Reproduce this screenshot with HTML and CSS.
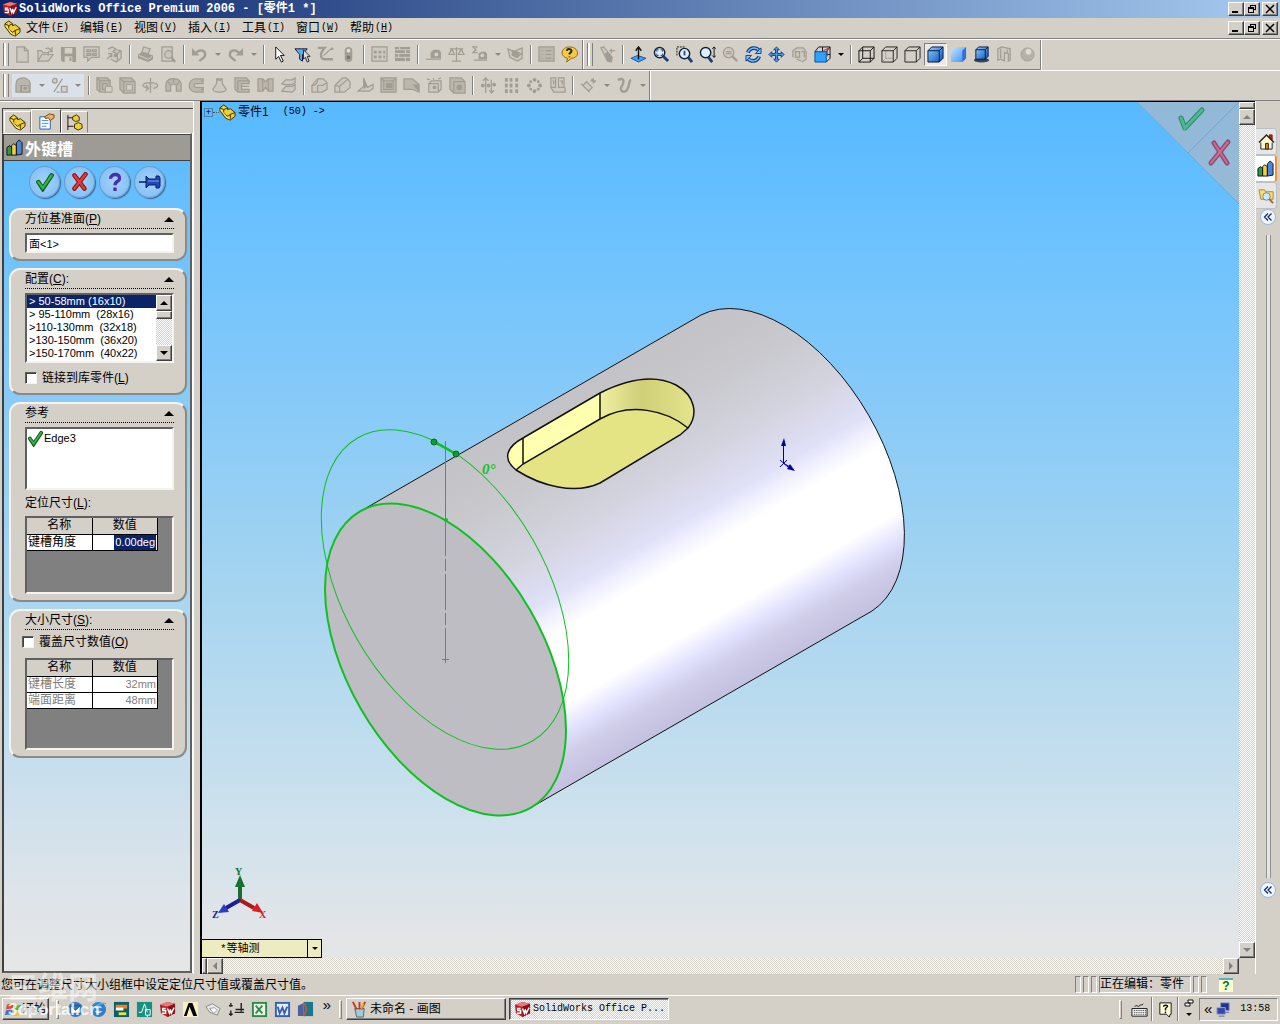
FILE: index.html
```html
<!DOCTYPE html>
<html lang="zh-CN">
<head>
<meta charset="utf-8">
<title>SolidWorks Office Premium 2006 - [零件1 *]</title>
<link rel="stylesheet" href="styles.css">
</head>
<body>
<svg class="sprite" aria-hidden="true">
  <defs>
    <linearGradient id="gBlue" x1="0" y1="0" x2="1" y2="1"><stop offset="0" stop-color="#8fd0ff"/><stop offset="1" stop-color="#0a50c0"/></linearGradient>
    <linearGradient id="gLight" x1="0" y1="0" x2="1" y2="1"><stop offset="0" stop-color="#c8e6ff"/><stop offset="1" stop-color="#3a8cf0"/></linearGradient>
  </defs>
  <symbol id="part" viewBox="0 0 18 18"><path d="M1 4l4-3 4 3v2l3-1 5 4v4l-5 4-5-2-6-8z" fill="#f0cf30" stroke="#3a2c00"/><path d="M1 4l4 2 4-2M5 6v4l4 3 3-2 5-2M12 11v6" fill="none" stroke="#3a2c00"/><path d="M2 6l6 8 4 2" fill="none" stroke="#fff080"/></symbol>
  <symbol id="sw" viewBox="0 0 18 18"><path d="M1 4l8-3 8 2v10l-8 4-7-4z" fill="#b81f28"/><path d="M1 4l8-3 8 2-8 3z" fill="#e87a78"/><path d="M9 6l8-3v10l-8 4z" fill="#8c1018"/><path d="M7 8H4v2h3v3H3M9 8l2 5 1-4 1 4 3-6" fill="none" stroke="#fff" stroke-width="1.5"/></symbol>
  <symbol id="new" viewBox="0 0 18 18"><path d="M3 1h8l4 4v12H3zM11 1v4h4" class="d"/></symbol>
  <symbol id="open" viewBox="0 0 18 18"><path d="M1 16V5h4l1 2h6v3M1 16l4-7h12l-5 7zM9 3c3-2 5 0 6 2M16 1v5h-4" class="d"/></symbol>
  <symbol id="save" viewBox="0 0 18 18"><path d="M1 1h16v16H3l-2-2z" class="s"/><path d="M5 2h8v6H5z" class="p"/><path d="M5 11h8v6H5z" class="p"/><path d="M10 12h2v4h-2z" class="s"/></symbol>
  <symbol id="drw" viewBox="0 0 18 18"><path d="M1 1h16v11H9l-4 4v-4H1zM4 4h4v2H4zM10 4h4v2h-4zM4 8h4v2H4zM10 8h4v2h-4z" class="d"/></symbol>
  <symbol id="asm" viewBox="0 0 18 18"><path d="M2 3l5-2 4 3 5 1v8l-5 4-6-3M7 6l5 2v8M7 6l4-3M12 8l4-3M1 14l5-5M6 12V8H2" class="d"/><circle cx="10" cy="10" r="2" class="s"/></symbol>
  <symbol id="print" viewBox="0 0 18 18"><path d="M5 7l2-6 7 2-2 5z" class="d"/><path d="M1 9l5-3 11 4v4l-5 3-11-4z" class="s"/><path d="M2 10l10 4 4-3" class="l"/></symbol>
  <symbol id="prev" viewBox="0 0 18 18"><path d="M2 1h11v15H2z" class="d"/><circle cx="9" cy="9" r="4" class="d"/><path d="M12 12l4 5" class="w"/></symbol>
  <symbol id="undo" viewBox="0 0 18 18"><path d="M5 8c3-5 10-4 10 1 0 4-4 4-6 7" class="w"/><path d="M1 2v8h8z" class="s"/></symbol>
  <symbol id="redo" viewBox="0 0 18 18"><path d="M13 8C10 3 3 4 3 9c0 4 4 4 6 7" class="w"/><path d="M17 2v8H9z" class="s"/></symbol>
  <symbol id="cursor" viewBox="0 0 18 18"><path d="M5 1v13l3-3 3 6 2-1-3-6h4z" fill="#fff" stroke="#111"/></symbol>
  <symbol id="filter" viewBox="0 0 18 18"><path d="M1 3h13l-5 6v7l-3-2V9z" fill="#58b4f0" stroke="#113"/><path d="M10 4v10l2-2 2 5 2-1-2-5h3z" fill="#ddd" stroke="#222"/></symbol>
  <symbol id="sketch" viewBox="0 0 18 18"><path d="M1 2h7c-5 5-5 12 0 12h9" class="w"/><path d="M7 10L16 2" class="d"/><circle cx="16" cy="3" r="1.5" class="s"/></symbol>
  <symbol id="light" viewBox="0 0 18 18"><rect x="5" y="1" width="8" height="16" rx="4" fill="currentColor"/><circle cx="9" cy="5" r="2" fill="#ddd"/><circle cx="9" cy="12" r="2" fill="#777"/></symbol>
  <symbol id="grid" viewBox="0 0 18 18"><path d="M1 1h16v15H1z" class="d"/><path d="M3 5h3v3H3zM8 5h3v3H8zM13 5h2v3h-2zM3 10h3v3H3zM8 10h3v3H8zM13 10h2v3h-2z" class="s"/></symbol>
  <symbol id="brick" viewBox="0 0 18 18"><path d="M1 1h16v15H1z" class="s"/><path d="M1 4h16M1 8h16M1 12h16M6 1v3M12 4v4M5 8v4M12 12v4" class="l"/></symbol>
  <symbol id="tape" viewBox="0 0 18 18"><path d="M6 13V7l3-3h6l2 3v6z" class="s"/><path d="M1 14h16" class="d"/><circle cx="12" cy="9" r="2" class="p"/></symbol>
  <symbol id="scale" viewBox="0 0 18 18"><path d="M9 1v15M4 16h10M2 3h14M4 3l-3 6h6zM14 3l-3 6h6z" class="d"/></symbol>
  <symbol id="sigma" viewBox="0 0 18 18"><path d="M7 1H2l3 3-3 3h5M3 15h14" class="d"/><path d="M8 14V8l3-2h4l2 2v6z" class="s"/><circle cx="12" cy="10" r="2" class="p"/></symbol>
  <symbol id="check" viewBox="0 0 18 18"><path d="M1 3l6 3 9-4v11l-5 3-8-4zM5 9l6 3 5-5" class="d"/><path d="M5 4l9 3-3 6-6-3z" class="s"/></symbol>
  <symbol id="list" viewBox="0 0 18 18"><path d="M1 1h16v15H1z" class="g"/><path d="M4 5h1M8 5h6M4 9h1M8 9h6M4 13h1M8 13h6" class="d"/></symbol>
  <symbol id="help" viewBox="0 0 18 18"><path d="M9 1c11 0 11 12 2 12l-5 4 1-4C-2 11 0 1 9 1z" fill="#f7cb3c" stroke="#8a6510"/><path d="M6 5c1-3 6-2 5 1L9 8v1M9 11v1" fill="none" stroke="#202040" stroke-width="2"/></symbol>
  <symbol id="wand" viewBox="0 0 18 18"><path d="M2 2l3-1 9 11-1 5-4-1z" class="d"/><path d="M6 8l3-2 5 6-1 5-4-1z" class="s"/><path d="M13 3v5M11 5h6" class="d"/></symbol>
  <symbol id="normal" viewBox="0 0 18 18"><path d="M1 13l7-3 9 3-8 4z" fill="#3e9ff4" stroke="#1556a8"/><path d="M9 14V2M6 5l3-4 3 4" fill="none" stroke="#111" stroke-width="1.5"/></symbol>
  <symbol id="fit" viewBox="0 0 18 18"><circle cx="7" cy="7" r="5.500" fill="#dceeff" stroke="#123" stroke-width="1.5"/><path d="M4 6V4h2M8 4h2v2M10 8v2H8M6 10H4V8" fill="none" stroke="#246"/><path d="M11 11l5 5" stroke="#164078" stroke-width="3"/></symbol>
  <symbol id="zarea" viewBox="0 0 18 18"><path d="M1 10V1h9" fill="none" stroke="#111" stroke-dasharray="2 1"/><circle cx="9" cy="8" r="5.500" fill="#dceeff" stroke="#123" stroke-width="1.5"/><path d="M13 12l4 5" stroke="#164078" stroke-width="3"/><path d="M9 5v5" stroke="#358" stroke-width="2"/></symbol>
  <symbol id="zio" viewBox="0 0 18 18"><circle cx="7" cy="7" r="5.500" fill="#dceeff" stroke="#123" stroke-width="1.5"/><path d="M10 12l4 5" stroke="#164078" stroke-width="3"/><path d="M16 1v11M14 3l2-2 2 2M14 10l2 2 2-2" fill="none" stroke="#111"/></symbol>
  <symbol id="zsel" viewBox="0 0 18 18"><circle cx="7" cy="7" r="5.500" class="d"/><path d="M4 6h6M4 8h6" class="d"/><path d="M11 11l5 5" class="w"/></symbol>
  <symbol id="rot" viewBox="0 0 18 18"><path d="M3 7c2-6 9-6 12-2M15 11c-2 6-9 6-12 2" fill="none" stroke="#124080" stroke-width="4"/><path d="M3 7c2-6 9-6 12-2M15 11c-2 6-9 6-12 2" fill="none" stroke="#7cc0f8" stroke-width="1.500"/><path d="M17 2v6h-6zM1 16v-6h6z" fill="#7cc0f8" stroke="#124080"/></symbol>
  <symbol id="pan" viewBox="0 0 18 18"><path d="M9 1l3 3h-2v4h4V6l3 3-3 3v-2h-4v4h2l-3 3-3-3h2v-4H4v2L1 9l3-3v2h4V4H6z" fill="#4d9be8" stroke="#0c3c88"/></symbol>
  <symbol id="rv" viewBox="0 0 18 18"><path d="M2 12V5l4-3h7l3 4v8l-4 3M5 12V6h4v6zM11 6h3v6M6 14l5 2" class="d"/></symbol>
  <symbol id="orient" viewBox="0 0 18 18"><path d="M5 1h12v12l-4 4M17 1l-4 5M9 1v5M13 9h4" fill="none" stroke="#111"/><path d="M10 5l6-3M14 4v7" stroke="#c02020"/><path d="M1 6h12v11H1z" fill="#2fa2ff" stroke="#0a48a0"/><path d="M1 6l4-5" stroke="#111"/></symbol>
  <symbol id="wire" viewBox="0 0 18 18"><path d="M1 5h12v12H1zM5 1h12v12H5zM1 5l4-4M13 5l4-4M1 17l4-4M13 17l4-4" fill="none" stroke="#111"/></symbol>
  <symbol id="hid" viewBox="0 0 18 18"><path d="M1 5h12v12H1zM1 5l4-4h12v12l-4 4M13 5l4-4" fill="none" stroke="#222"/><path d="M5 5v8h8M1 17l4-4" fill="none" stroke="#777" stroke-dasharray="1 1"/></symbol>
  <symbol id="norm" viewBox="0 0 18 18"><path d="M1 5h12v12H1zM1 5l4-4h12v12l-4 4M13 5l4-4" fill="none" stroke="#222"/></symbol>
  <symbol id="shade" viewBox="0 0 18 18"><path d="M1 5l4-4h12v12l-4 4H1z" fill="url(#gBlue)" stroke="#001838"/><path d="M1 5h12v12M13 5l4-4" fill="none" stroke="#001838"/></symbol>
  <symbol id="shade2" viewBox="0 0 18 18"><path d="M1 5l4-4h12v12l-4 4H1z" fill="url(#gLight)"/><path d="M13 5l4-4v12l-4 4z" fill="#2c70d8"/></symbol>
  <symbol id="shadow" viewBox="0 0 18 18"><ellipse cx="9" cy="15" rx="8" ry="2.5" fill="#345"/><path d="M3 4l3-3h10v10l-3 3H3z" fill="url(#gBlue)" stroke="#001838"/><path d="M3 4h10v10M13 4l3-3" fill="none" stroke="#001838"/></symbol>
  <symbol id="sect" viewBox="0 0 18 18"><path d="M2 3l4-2 9 2v12l-2 1V8L9 7v9l-4-2-3 1z" class="d"/><path d="M5 3v10M12 4v3" class="d"/></symbol>
  <symbol id="ball" viewBox="0 0 18 18"><circle cx="9" cy="9" r="7" fill="#b4b1a9" stroke="#a5a29a"/><circle cx="10" cy="6" r="3" fill="#dedbd4"/></symbol>
  <symbol id="f1" viewBox="0 0 18 18"><path d="M1 16V8c0-9 13-9 15-2v10zM6 16V9h8" class="g"/><path d="M7 9h8v7H7z" class="d"/><circle cx="11" cy="12" r="2" class="s"/></symbol>
  <symbol id="f2" viewBox="0 0 18 18"><circle cx="4" cy="4" r="2.500" class="d"/><path d="M3 16L12 2M11 10h6v6h-6zM6 16h3" class="d"/></symbol>
  <symbol id="f3" viewBox="0 0 18 18"><path d="M1 1h11l3 3v12H4l-3-3z" class="g"/><path d="M4 4h11M4 4v12M1 1l3 3M7 7h5v6H7z" class="d"/><path d="M10 10h7v6h-7z" class="k"/></symbol>
  <symbol id="f4" viewBox="0 0 18 18"><path d="M1 1h12l4 4v12H5l-4-4z" class="g"/><path d="M5 5h12M5 5v12M1 1l4 4" class="d"/><path d="M8 8h6v6H8z" class="k"/></symbol>
  <symbol id="f5" viewBox="0 0 18 18"><path d="M9 1v16M6 12c-8-2-6-6 3-6s10 5 3 6M4 9l3 3-3 3" class="d"/></symbol>
  <symbol id="f6" viewBox="0 0 18 18"><path d="M1 15V7c2-7 14-7 16 0v8h-5V9c-1-2-5-2-6 0v6z" class="g"/><path d="M6 9L3 5M12 9l3-4M9 2v5" class="d"/></symbol>
  <symbol id="f7" viewBox="0 0 18 18"><path d="M16 2H8C-1 3-1 15 8 16h8v-5H9c-3 0-3-4 0-4h7z" class="g"/><path d="M16 2l-2 3M16 11l-2 3" class="d"/></symbol>
  <symbol id="f8" viewBox="0 0 18 18"><path d="M6 2h6v5l4 6c0 4-14 4-14 0l4-6zM6 2c2 2 4 2 6 0" class="d"/></symbol>
  <symbol id="f9" viewBox="0 0 18 18"><path d="M1 1h12l3 3v3H8v6h8v3H4l-3-3z" class="g"/><path d="M4 4h12M4 4v12M8 10h8" class="d"/></symbol>
  <symbol id="f10" viewBox="0 0 18 18"><path d="M1 2h5l3 3 3-3h5v13h-5l-3-4-3 4H1z" class="g"/><path d="M6 2v13M12 2v13" class="d"/></symbol>
  <symbol id="f11" viewBox="0 0 18 18"><path d="M2 7l4-4h7l3-2v5l-3 2H5zM2 15l4-5h7l3-2v5l-3 3z" class="d"/></symbol>
  <symbol id="f12" viewBox="0 0 18 18"><path d="M1 16V9l6-7h6l4 4v7l-5 3z" class="d"/><path d="M1 9c4 0 6-2 6-7M7 9h5l5-3M7 9v7" class="d"/></symbol>
  <symbol id="f13" viewBox="0 0 18 18"><path d="M1 16V9l8-8h4l4 4v6l-6 5z" class="d"/><path d="M1 9l5 1 9-8M6 10v6" class="d"/></symbol>
  <symbol id="f14" viewBox="0 0 18 18"><path d="M7 1v9l-6 5h12l4-3V8l-6 3zM7 10h5" class="d"/><path d="M7 3l4 7-4 3z" class="s"/></symbol>
  <symbol id="f15" viewBox="0 0 18 18"><path d="M1 1h16v15H1z" class="g"/><path d="M4 4h10v9H4zM1 1l3 3M17 1l-3 3" class="d"/><path d="M6 6h7v6H6z" class="s"/></symbol>
  <symbol id="f16" viewBox="0 0 18 18"><path d="M1 2h9l7 6v8L10 13H1z" class="g"/><path d="M10 8h7v8z" class="s"/></symbol>
  <symbol id="f17" viewBox="0 0 18 18"><path d="M3 7h10v9H3zM3 7l3-3h10v9l-3 3M1 2l3 1M8 1v2M13 2l3-1" class="d"/><circle cx="9" cy="11" r="2" class="s"/></symbol>
  <symbol id="f18" viewBox="0 0 18 18"><path d="M1 1h12l4 4v12H5l-4-4z" class="g"/><path d="M5 5h12M5 5v12" class="d"/><circle cx="11" cy="11" r="3" class="s"/></symbol>
  <symbol id="f19" viewBox="0 0 18 18"><path d="M6 1v16M3 4l3-3 3 3M12 3v13M10 14l2 3 3-3" class="d"/><circle cx="3" cy="9" r="2" class="s"/><circle cx="15" cy="8" r="2" class="s"/><circle cx="9" cy="9" r="2" class="s"/></symbol>
  <symbol id="f20" viewBox="0 0 18 18"><path d="M2 1h3v4H2zM7 1h3v4H7zM13 1h3v4h-3zM2 7h3v4H2zM7 7h3v4H7zM13 7h3v4h-3zM2 13h3v4H2zM7 13h3v4H7zM13 13h3v4h-3z" class="s"/></symbol>
  <symbol id="f21" viewBox="0 0 18 18"><g class="s"><circle cx="9" cy="3" r="2"/><circle cx="9" cy="15" r="2"/><circle cx="3" cy="9" r="2"/><circle cx="15" cy="9" r="2"/><circle cx="5" cy="5" r="1.500"/><circle cx="13" cy="5" r="1.500"/><circle cx="5" cy="13" r="1.500"/><circle cx="13" cy="13" r="1.500"/></g></symbol>
  <symbol id="f22" viewBox="0 0 18 18"><path d="M2 1h5v10H2zM10 1h6v10h-6zM2 11l3 5h12v-5M4 4h1v4M12 4h2v4" class="d"/></symbol>
  <symbol id="f23" viewBox="0 0 18 18"><path d="M3 9l4-4 6 6-4 4zM1 7l9 9M14 1v6M11 4h6M12 2l4 4" class="d"/></symbol>
  <symbol id="f24" viewBox="0 0 18 18"><path d="M2 3c7-3 7 2 4 7s3 8 6 3 1-9 4-10" class="w"/></symbol>
  <symbol id="lib" viewBox="0 0 18 18"><path d="M1 9l3-2 2 2v8H1z" fill="#2c9a40" stroke="#111"/><path d="M6 7l2-2 3 2v10H6z" fill="#f0d040" stroke="#111"/><path d="M11 4l3-3 3 3v12l-6 1z" fill="#4b86d8" stroke="#111"/></symbol>
  <symbol id="prop" viewBox="0 0 18 18"><path d="M2 4h11v13H2z" fill="#fff" stroke="#1c60b0"/><path d="M4 8h7M4 11h7M4 14h5" stroke="#3a8cd8"/><path d="M7 4l5-3 5 1v3l-4 3-2-3-3 1z" fill="#f0b070" stroke="#7a4010"/></symbol>
  <symbol id="conf" viewBox="0 0 18 18"><path d="M2 1v16M2 4h5M2 13h6" stroke="#111"/><path d="M7 3l4-2 3 2v4l-4 1-3-2zM9 11l4-2 4 2v4l-4 2-4-2z" fill="#f0cf30" stroke="#3a2c00"/></symbol>
  <symbol id="gtick" viewBox="0 0 18 18"><path d="M3 9l4 6L15 3" fill="none" stroke="#0c5c1c" stroke-width="4" stroke-linecap="round"/><path d="M3 9l4 5.500L15 3" fill="none" stroke="#35b84a" stroke-width="2" stroke-linecap="round"/></symbol>
  <symbol id="rx" viewBox="0 0 18 18"><path d="M4 3l9 12M14 2L4 15" stroke="#8c1418" stroke-width="4" stroke-linecap="round"/><path d="M4 3l9 12M14 2L4 15" stroke="#e0403c" stroke-width="2" stroke-linecap="round"/></symbol>
  <symbol id="pq" viewBox="0 0 18 18"><path d="M5 6c0-5 9-5 8 0 0 3-4 2-4 6M9 14v3" fill="none" stroke="#4a2cb0" stroke-width="3"/></symbol>
  <symbol id="pin" viewBox="0 0 24 18"><path d="M1 9h8" stroke="#0a1c60" stroke-width="1.500"/><path d="M8 3l3 3h7V3h3l1 2v8l-1 2h-3v-3h-7l-3 3z" fill="#2248b8" stroke="#0a1c60"/><path d="M10 8h11" stroke="#7aa0f0"/></symbol>
  <symbol id="house" viewBox="0 0 18 18"><path d="M3 9v8h12V9" fill="#fff8d0" stroke="#222"/><path d="M12 2h3v6h-3z" fill="#b02020" stroke="#901010"/><path d="M1 10l8-8 8 8" fill="#fff8d0" stroke="#222" stroke-width="1.500"/><path d="M8 11h3v6H8z" fill="#d09020" stroke="#222"/></symbol>
  <symbol id="folder" viewBox="0 0 18 18"><path d="M1 3h6l1 2h8v8H3z" fill="#f8dc70" stroke="#b08820"/><circle cx="9" cy="10" r="4" fill="#cfe8ff" stroke="#5a88b0"/><path d="M12 13l4 4" stroke="#b06820" stroke-width="2"/></symbol>
  <symbol id="mini" viewBox="0 0 10 10"><path d="M1 8h6" stroke="#000" stroke-width="2"/></symbol>
  <symbol id="rest" viewBox="0 0 10 10"><path d="M3 1h6v1H3zM8 2h1v4H7V5h1zM3 2h1v1H3zM1 3h6v2H1zM1 5h1v4H1zM6 5h1v4H6zM1 8h6v1H1z" fill="#000"/></symbol>
  <symbol id="close" viewBox="0 0 10 10"><path d="M1 1l8 8M9 1L1 9" stroke="#000" stroke-width="1.500"/></symbol>
  <symbol id="win" viewBox="0 0 18 18"><path d="M2 4c3-2 5-1 7 0l-1 5c-2-1-4-1-7 0z" fill="#e04a28"/><path d="M10 4c2 1 4 1 7 0l-1 5c-3 1-5 1-7 0z" fill="#50b040"/><path d="M1 10c3-1 5-1 7 0l-1 5c-2-1-4-1-7 0z" fill="#3070e0"/><path d="M9 10c2 1 4 1 7 0l-1 5c-3 1-5 1-7 0z" fill="#f0c020"/></symbol>
  <symbol id="paint" viewBox="0 0 18 18"><path d="M4 8h10l-1 9H6z" fill="#a8c8d8" stroke="#486878"/><path d="M6 9L2 1M9 9V1M11 9l4-8" stroke="#c83820" stroke-width="2"/><path d="M11 8l2-5" stroke="#e0b020" stroke-width="2"/></symbol>
</svg>

<header class="titlebar">
  <svg class="i16"><use href="#sw"/></svg>
  <h1>SolidWorks Office Premium 2006 - [零件1 *]</h1>
  <div class="winbtns"><button aria-label="最小化"><svg><use href="#mini"/></svg></button><button aria-label="还原"><svg><use href="#rest"/></svg></button><button class="x" aria-label="关闭"><svg><use href="#close"/></svg></button></div>
</header>
<nav class="menubar">
  <svg class="i18"><use href="#part"/></svg>
  <button>文件<span>(<u>F</u>)</span></button><button>编辑<span>(<u>E</u>)</span></button><button>视图<span>(<u>V</u>)</span></button><button>插入<span>(<u>I</u>)</span></button><button>工具<span>(<u>T</u>)</span></button><button>窗口<span>(<u>W</u>)</span></button><button>帮助<span>(<u>H</u>)</span></button>
  <div class="winbtns"><button aria-label="最小化文档"><svg><use href="#mini"/></svg></button><button aria-label="还原文档"><svg><use href="#rest"/></svg></button><button class="x" aria-label="关闭文档"><svg><use href="#close"/></svg></button></div>
</nav>

<div class="toolrow">
  <div class="toolbar">
    <i class="grip"></i>
    <button aria-label="新建"><svg><use href="#new"/></svg></button><button aria-label="打开"><svg><use href="#open"/></svg></button><button aria-label="保存"><svg><use href="#save"/></svg></button><button aria-label="工程图"><svg><use href="#drw"/></svg></button><button aria-label="装配体"><svg><use href="#asm"/></svg></button>
    <i class="sep"></i>
    <button aria-label="打印"><svg><use href="#print"/></svg></button><button aria-label="打印预览"><svg><use href="#prev"/></svg></button>
    <i class="sep"></i>
    <button aria-label="撤消"><svg><use href="#undo"/></svg></button><i class="caret"></i><button aria-label="重做"><svg><use href="#redo"/></svg></button><i class="caret"></i>
    <i class="sep"></i>
    <button aria-label="选择"><svg><use href="#cursor"/></svg></button><button aria-label="过滤器"><svg><use href="#filter"/></svg></button><button aria-label="草图"><svg><use href="#sketch"/></svg></button><button aria-label="重建"><svg><use href="#light"/></svg></button>
    <i class="sep"></i>
    <button aria-label="颜色"><svg><use href="#grid"/></svg></button><button aria-label="纹理"><svg><use href="#brick"/></svg></button>
    <i class="sep"></i>
    <button aria-label="测量"><svg><use href="#tape"/></svg></button><button aria-label="质量特性"><svg><use href="#scale"/></svg></button><button aria-label="方程式"><svg><use href="#sigma"/></svg></button><i class="caret"></i><button aria-label="检查"><svg><use href="#check"/></svg></button>
    <i class="sep"></i>
    <button aria-label="选项"><svg><use href="#list"/></svg></button><button aria-label="帮助"><svg><use href="#help"/></svg></button>
  </div>
  <div class="toolbar">
    <i class="grip"></i>
    <button aria-label="上一视图"><svg><use href="#wand"/></svg></button>
    <i class="sep"></i>
    <button aria-label="正视于"><svg><use href="#normal"/></svg></button><button aria-label="整屏显示"><svg><use href="#fit"/></svg></button><button aria-label="局部放大"><svg><use href="#zarea"/></svg></button><button aria-label="放大缩小"><svg><use href="#zio"/></svg></button><button aria-label="放大选取"><svg><use href="#zsel"/></svg></button><button aria-label="旋转"><svg><use href="#rot"/></svg></button><button aria-label="平移"><svg><use href="#pan"/></svg></button><button aria-label="翻滚"><svg><use href="#rv"/></svg></button><button aria-label="标准视图"><svg><use href="#orient"/></svg></button><i class="caret dark"></i>
    <i class="sep"></i>
    <button aria-label="线架图"><svg><use href="#wire"/></svg></button><button aria-label="隐藏线可见"><svg><use href="#hid"/></svg></button><button aria-label="消除隐藏线"><svg><use href="#norm"/></svg></button><button class="on" aria-label="带边线上色"><svg><use href="#shade"/></svg></button><button aria-label="上色"><svg><use href="#shade2"/></svg></button><button aria-label="阴影"><svg><use href="#shadow"/></svg></button><button aria-label="剖面视图"><svg><use href="#sect"/></svg></button><button aria-label="真实视图"><svg><use href="#ball"/></svg></button>
  </div>
</div>
<div class="toolrow second">
  <div class="toolbar">
    <i class="grip"></i>
    <div class="hot"><button aria-label="特征"><svg><use href="#f1"/></svg></button><i class="caret"></i><button aria-label="草图绘制"><svg><use href="#f2"/></svg></button><i class="caret"></i></div>
    <i class="sep"></i>
    <button aria-label="拉伸"><svg><use href="#f3"/></svg></button><button aria-label="拉伸切除"><svg><use href="#f4"/></svg></button><button aria-label="旋转凸台"><svg><use href="#f5"/></svg></button><button aria-label="旋转切除"><svg><use href="#f6"/></svg></button><button aria-label="扫描"><svg><use href="#f7"/></svg></button><button aria-label="放样"><svg><use href="#f8"/></svg></button><button aria-label="扫描切除"><svg><use href="#f9"/></svg></button><button aria-label="放样切除"><svg><use href="#f10"/></svg></button><button aria-label="加厚"><svg><use href="#f11"/></svg></button>
    <i class="sep"></i>
    <button aria-label="圆角"><svg><use href="#f12"/></svg></button><button aria-label="倒角"><svg><use href="#f13"/></svg></button><button aria-label="筋"><svg><use href="#f14"/></svg></button><button aria-label="抽壳"><svg><use href="#f15"/></svg></button><button aria-label="拔模"><svg><use href="#f16"/></svg></button><button aria-label="异型孔"><svg><use href="#f17"/></svg></button><button aria-label="孔"><svg><use href="#f18"/></svg></button>
    <i class="sep"></i>
    <button aria-label="镜向"><svg><use href="#f19"/></svg></button><button aria-label="线性阵列"><svg><use href="#f20"/></svg></button><button aria-label="圆周阵列"><svg><use href="#f21"/></svg></button><button aria-label="移动实体"><svg><use href="#f22"/></svg></button>
    <i class="sep"></i>
    <button aria-label="参考几何体"><svg><use href="#f23"/></svg></button><i class="caret"></i><button aria-label="曲线"><svg><use href="#f24"/></svg></button><i class="caret"></i>
  </div>
</div>

<main>
  <aside class="panel">
    <div class="tabs"><button aria-label="特征管理器"><svg><use href="#part"/></svg></button><button class="active" aria-label="属性管理器"><svg><use href="#prop"/></svg></button><button aria-label="配置管理器"><svg><use href="#conf"/></svg></button></div>
    <div class="pm">
      <h2><svg class="i18"><use href="#lib"/></svg>外键槽</h2>
      <div class="acts"><button aria-label="确定"><svg><use href="#gtick"/></svg></button><button aria-label="取消"><svg><use href="#rx"/></svg></button><button aria-label="帮助"><svg><use href="#pq"/></svg></button><button aria-label="保持可见"><svg class="wide"><use href="#pin"/></svg></button></div>

      <section class="group">
        <h3><label for="plane">方位基准面(<u>P</u>)</label><i class="tri"></i></h3>
        <input id="plane" class="field" value="面&lt;1&gt;">
      </section>

      <section class="group">
        <h3><label for="cfg">配置(<u>C</u>):</label><i class="tri"></i></h3>
        <div class="listbox">
          <select id="cfg" size="5">
            <option selected>&gt; 50-58mm (16x10)</option><option>&gt; 95-110mm&nbsp; (28x16)</option><option>&gt;110-130mm&nbsp; (32x18)</option><option>&gt;130-150mm&nbsp; (36x20)</option><option>&gt;150-170mm&nbsp; (40x22)</option>
          </select>
          <div class="sb"><button class="up" aria-label="向上"></button><i class="thumb"></i><button class="down" aria-label="向下"></button></div>
        </div>
        <label class="tick"><input type="checkbox"><span>链接到库零件(<u>L</u>)</span></label>
      </section>

      <section class="group">
        <h3><span>参考</span><i class="tri"></i></h3>
        <div class="refs"><svg class="i18"><use href="#gtick"/></svg>Edge3</div>
        <p class="cap">定位尺寸(<u>L</u>):</p>
        <div class="tbl">
          <table><tr><th>名称</th><th>数值</th></tr><tr><td>键槽角度</td><td class="edit"><span>0.00deg</span></td></tr></table>
        </div>
      </section>

      <section class="group">
        <h3><span>大小尺寸(<u>S</u>):</span><i class="tri"></i></h3>
        <label class="tick out"><input type="checkbox"><span>覆盖尺寸数值(<u>O</u>)</span></label>
        <div class="tbl tall">
          <table class="off"><tr><th>名称</th><th>数值</th></tr><tr><td>键槽长度</td><td>32mm</td></tr><tr><td>端面距离</td><td>48mm</td></tr></table>
        </div>
      </section>
    </div>
  </aside>

  <div class="view">
    <div class="canvas">
      <svg class="scene" viewBox="202 102 1037 856" role="img" aria-label="零件模型">
        <defs>
          <linearGradient id="cyl" gradientUnits="userSpaceOnUse" x1="360" y1="511" x2="531" y2="807">
            <stop offset="0" stop-color="#c3c2c6"/><stop offset=".18" stop-color="#c8c8cd"/><stop offset=".36" stop-color="#d4d4e0"/><stop offset=".5" stop-color="#e0e0f8"/><stop offset=".54" stop-color="#eeeeff"/><stop offset=".6" stop-color="#fff"/><stop offset=".79" stop-color="#fff"/><stop offset=".86" stop-color="#e2e2ff"/><stop offset=".92" stop-color="#cfcde8"/><stop offset="1" stop-color="#c4c0e0"/>
          </linearGradient>
          <linearGradient id="pocket" x1="0" x2="1"><stop offset="0" stop-color="#efefa0"/><stop offset=".45" stop-color="#cfcf78"/><stop offset="1" stop-color="#e4e48c"/></linearGradient>
        </defs>
        <path d="M360 511.500L701 315A171 98 60 0 1 872 611L531 807.500A171 98 60 0 1 360 511.500z" fill="url(#cyl)" stroke="#111"/>
        <ellipse cx="445.500" cy="659.500" rx="171" ry="98" transform="rotate(60 445.500 659.500)" fill="#bdbdc3" stroke="#10c020" stroke-width="2"/>
        <path d="M523 438L600 393C630 378 656 375 676 385C696 396 698 415 688 428L680 435L600 483C575 495 541 486 516 470C501 458 508 446 523 438z" fill="#e4e484"/>
        <path d="M516 470C501 458 508 446 523 438L600 393V419L523 464z" fill="#ffffb0"/>
        <path d="M600 393C630 378 656 375 676 385C696 396 698 415 688 428C666 410 630 402 600 419z" fill="url(#pocket)"/>
        <path d="M523 438L600 393C630 378 656 375 676 385C696 396 698 415 688 428L680 435L600 483C575 495 541 486 516 470C501 458 508 446 523 438zM523 438V464M600 393V419M516 470L523 464L600 419C630 402 666 410 688 428" fill="none" stroke="#111" stroke-width="1.500"/>
        <ellipse cx="445" cy="589.500" rx="175" ry="101" transform="rotate(60 445 589.500)" fill="none" stroke="#10c020"/>
        <g fill="none" stroke="#10c020" shape-rendering="crispEdges"><path d="M445.500 441V520"/><path d="M445.500 520V660" stroke-dasharray="36 3 12 3"/><path d="M442 659.500h7M445.500 656v7"/></g>
        <path d="M434 442L456 454" stroke="#10c020" stroke-width="2"/>
        <g fill="#10a018" stroke="#063"><circle cx="434" cy="442" r="3"/><circle cx="456" cy="454" r="3"/></g><circle cx="446" cy="520" r="2" fill="#10c020"/>
        <text x="482" y="474" class="deg">0°</text>
        <g stroke="#0000a0" fill="#0000a0"><path d="M783.500 464V442M780 460l8 7M780 467l7-7M783 463l9 5"/><path d="M781 446h5l-2-8zM787 469l3-5 5 7z" stroke="none"/></g>
        <path d="M240 900V884" stroke="#187030" stroke-width="4"/><path d="M240 875l5 12h-10z" fill="#187030"/>
        <path d="M240 900L226 908" stroke="#1820a0" stroke-width="4"/><path d="M218 913l6-9 5 8z" fill="#2a3cc8"/>
        <path d="M240 900L254 908" stroke="#b01818" stroke-width="4"/><path d="M263 913l-11-2 5-8z" fill="#d82020"/>
        <text x="235" y="875" class="ax y">Y</text><text x="212" y="918" class="ax z">Z</text><text x="259" y="918" class="ax x">X</text>
      </svg>
      <div class="tree"><button aria-label="展开">+</button><i></i><svg class="i18"><use href="#part"/></svg><span>零件1</span><span class="n">(50)&nbsp;-&gt;</span></div>
      <svg class="corner" viewBox="0 0 102 102"><path d="M0 0h102v102z" fill="#a8b8c8" fill-opacity=".72"/><path d="M0 0l102 102M102 0L51 51" stroke="#7aa4c8"/><path d="M44 16l4 10 17-18" fill="none" stroke="#2c8a68" stroke-width="5" stroke-linecap="round" stroke-linejoin="round"/><path d="M44 16l4 10 17-18" fill="none" stroke="#4fb890" stroke-width="3" stroke-linecap="round"/><path d="M77 41l13 20M91 40L74 61" stroke="#984870" stroke-width="5" stroke-linecap="round"/><path d="M77 41l13 20M91 40L74 61" stroke="#c07090" stroke-width="2" stroke-linecap="round"/></svg>
      <div class="viewname"><select aria-label="视图方向"><option>*等轴测</option></select><i class="caret dark"></i></div>
    </div>
    <div class="vs"><i class="split"></i><button class="up" aria-label="向上滚动"></button><button class="down" aria-label="向下滚动"></button></div>
    <div class="hs"><i class="split"></i><button class="left" aria-label="向左滚动"></button><button class="right" aria-label="向右滚动"></button></div>
  </div>

  <aside class="taskpane">
    <button class="tp" aria-label="资源"><svg><use href="#house"/></svg></button><button class="tp active" aria-label="设计库"><svg><use href="#lib"/></svg></button><button class="tp" aria-label="文件探索器"><svg><use href="#folder"/></svg></button>
    <button class="round" aria-label="展开任务窗格"><svg viewBox="0 0 16 16"><path d="M8 4L4 8l4 4M12 4L8 8l4 4"/></svg></button>
    <i class="rail"></i>
    <button class="round" aria-label="展开"><svg viewBox="0 0 16 16"><path d="M8 4L4 8l4 4M12 4L8 8l4 4"/></svg></button>
  </aside>
</main>

<footer class="status">
  <span>您可在调整尺寸大小组框中设定定位尺寸值或覆盖尺寸值。</span>
  <div class="cells"><i></i><i></i><i></i><b>正在编辑：零件</b><i></i><i></i></div>
  <em>?</em>
</footer>
<footer class="taskbar">
  <button class="start"><svg class="i18"><use href="#win"/></svg>开始</button>
  <i class="bar"></i>
  <div class="quick">
    <button aria-label="Outlook"><svg viewBox="0 0 18 18"><circle cx="9" cy="9" r="8" fill="#2f78c0"/><path d="M4 5h10v8H4zM4 5l5 5 5-5" fill="#fff" stroke="#2058a0"/></svg></button>
    <button aria-label="Internet Explorer"><svg viewBox="0 0 18 18"><circle cx="9" cy="9" r="6" fill="none" stroke="#2a80d0" stroke-width="4"/><path d="M4 9h11" stroke="#2a80d0" stroke-width="3"/><path d="M1 14C3 5 12 1 17 3" fill="none" stroke="#60b0e8" stroke-width="1.500"/></svg></button>
    <button aria-label="管理器"><svg viewBox="0 0 18 18"><path d="M1 1h16v16H1z" fill="#086068"/><path d="M3 4h12v4H3z" fill="#f08020"/><path d="M3 7h8v3H3z" fill="#fff"/><path d="M6 12h8v3H6z" fill="#f0e040"/></svg></button>
    <button aria-label="CAD"><svg viewBox="0 0 18 18"><path d="M1 1h16v16H1z" fill="#189080"/><path d="M3 12h3l3-9 3 9M10 9h5v6h-5zM12 15v2" fill="none" stroke="#fff"/></svg></button>
    <button aria-label="SolidWorks"><svg><use href="#sw"/></svg></button>
    <button aria-label="Ansys"><svg viewBox="0 0 18 18"><path d="M1 1h16v16H1z" fill="#f8f0c0"/><path d="M2 16L7 2h4l5 14h-4L8 6 5 16z" fill="#000"/></svg></button>
    <button aria-label="扫描仪"><svg viewBox="0 0 18 18"><path d="M1 6l7-3 8 5-3 7-8-3z" fill="#e8e8e8" stroke="#888"/><path d="M5 8l5-1 3 3-4 3z" fill="#fff" stroke="#999"/></svg></button>
    <button aria-label="标注"><svg viewBox="0 0 18 18"><path d="M3 2v4M1 5h4M3 10v6M1 14h4M7 12h10M14 2v9M8 9h9" fill="none" stroke="#222" stroke-width="1.500"/></svg></button>
    <button aria-label="Excel"><svg viewBox="0 0 18 18"><path d="M1 1h16v16H1z" fill="#2f8a48"/><path d="M3 3h12v12H3z" fill="#e8f4e8"/><path d="M5 5l7 8M12 5l-7 8" stroke="#2f8a48" stroke-width="2"/></svg></button>
    <button aria-label="Word"><svg viewBox="0 0 18 18"><path d="M1 1h16v16H1z" fill="#3060b8"/><path d="M3 3h12v12H3z" fill="#e8eef8"/><path d="M4 6l2 7 3-6 2 6 3-7" fill="none" stroke="#3060b8" stroke-width="2"/></svg></button>
    <button aria-label="工具"><svg viewBox="0 0 18 18"><path d="M1 5l6-3v14H1z" fill="#506098"/><path d="M7 1h10v15H7z" fill="#18788c"/><path d="M8 2l2 7-3 7" fill="none" stroke="#d05040" stroke-width="2"/></svg></button>
  </div>
  <span class="more">»</span>
  <i class="bar"></i>
  <button class="task"><svg class="i18"><use href="#paint"/></svg>未命名 - 画图</button>
  <button class="task down"><svg class="i18"><use href="#sw"/></svg><span>SolidWorks Office P...</span></button>
  <div class="tray">
    <i class="bar"></i>
    <button aria-label="键盘"><svg viewBox="0 0 18 18"><path d="M1 8h16v8H1z" fill="#fff" stroke="#111"/><path d="M3 10h13M3 12h13M3 14h13" stroke="#111" stroke-dasharray="1 1"/><path d="M4 6c2-3 3 1 5-1s3 0 4-2" fill="none" stroke="#111"/></svg></button>
    <i class="line"></i>
    <button aria-label="输入法帮助"><svg viewBox="0 0 18 18"><path d="M3 2h12v12h-1l-1 3-3-3H3z" fill="#ffffd8" stroke="#111"/><path d="M7 6c0-2 5-2 4 0L9 8v2M9 11v2" fill="none" stroke="#111" stroke-width="1.500"/></svg></button>
    <i class="line"></i>
    <span class="opts"><svg viewBox="0 0 10 10"><path d="M4 1h5v3H4zM1 4h5v3H1z" fill="#fff" stroke="#111"/></svg><i class="caret dark"></i></span>
    <div class="clock"><span>«</span><svg class="i18" viewBox="0 0 18 18"><path d="M6 2h9v8H6z" fill="#203090" stroke="#8890c8"/><path d="M2 7h9v7H2z" fill="#304aa8" stroke="#a0a8d8"/><path d="M4 16h6M11 12h4" stroke="#667"/></svg><time>13:58</time></div>
  </div>
  <div class="mark" aria-hidden="true"><strong>三维网</strong><span>3dportal.cn</span></div>
</footer>
</body>
</html>
```
FILE: styles.css
```css
* { box-sizing: border-box; }
body {
  margin: 0;
  min-height: 100vh;
  display: flex;
  flex-direction: column;
  background: #d4d0c8;
  color: #000;
  font: 12px/16px "Liberation Sans", "Noto Sans CJK SC", sans-serif;
}
button {
  margin: 0;
  padding: 0;
  border: 0;
  background: none;
  color: inherit;
  font: inherit;
  display: flex;
  align-items: center;
  justify-content: center;
}
h1, h2, h3, p { margin: 0; }
i, em { font-style: normal; flex: none; }
svg { display: block; flex: none; }
u { text-underline-offset: 1px; }
.sprite { position: absolute; width: 0; height: 0; }
.i16 { width: 16px; height: 16px; }
.i18 { width: 17px; height: 17px; }

/* greyed-out icon strokes and fills */
.d { fill: #c6c2b8; fill-opacity: .5; stroke: currentColor; stroke-width: 1.3; }
.g { fill: #bbb7ad; stroke: currentColor; stroke-width: 1.3; }
.k { fill: #d4d0c8; stroke: currentColor; }
.p { fill: #d4d0c8; }
.s { fill: currentColor; }
.w { fill: none; stroke: currentColor; stroke-width: 2.5; }
.l { fill: none; stroke: #d4d0c8; }

/* title and menu */
.titlebar {
  height: 18px;
  display: flex;
  align-items: center;
  gap: 1px;
  padding: 0 2px;
  background: linear-gradient(90deg, #0a246a, #a6caf0);
}
.titlebar h1 {
  color: #fff;
  font: bold 12px/16px "Liberation Mono", "Noto Sans CJK SC", monospace;
  white-space: pre;
}
.winbtns { display: flex; margin-left: auto; }
.winbtns button, .vs button, .hs button, .sb button, .thumb, .split {
  background: #d4d0c8;
  border: 1px solid;
  border-color: #fff #404040 #404040 #fff;
  box-shadow: inset -1px -1px #808080;
}
.winbtns button { width: 16px; height: 14px; }
.winbtns .x { margin-left: 2px; }
.winbtns svg { width: 10px; height: 10px; }
.menubar {
  height: 21px;
  display: flex;
  align-items: center;
  padding: 0 2px 0 4px;
  border-bottom: 1px solid #808080;
}
.menubar > svg { margin-right: 5px; }
.menubar > button { width: 54px; justify-content: flex-start; }
.menubar span { font: 10px/16px "Liberation Mono", monospace; padding-left: 1px; }

/* toolbars */
.toolrow { display: flex; height: 31px; border-top: 1px solid #fff; }
.second { height: 30px; }
.toolbar {
  display: flex;
  align-items: center;
  padding: 0 1px 0 3px;
  border-right: 1px solid #808080;
  border-bottom: 1px solid #808080;
  box-shadow: 1px 0 #fff;
  color: #a19d93;
}
.second .toolbar { border-bottom: 0; padding-right: 0; }
.toolbar button { width: 23px; height: 23px; }
.toolbar button svg { width: 17px; height: 17px; }
.toolbar button.on { border: 1px solid; border-color: #808080 #fff #fff #808080; background: #ece9e4; }
.grip { width: 6px; height: 23px; margin-right: 2px; border: solid #808080; border-width: 0 1px; background: #fff; box-shadow: inset -2px 0 #d4d0c8; }
.toolbar + .toolbar .grip { margin: 0 3px 0 1px; }
.sep { width: 2px; height: 19px; margin: 0 3px; border-left: 1px solid #808080; border-right: 1px solid #fff; }
.caret { width: 13px; display: flex; justify-content: center; }
.caret::before { content: ""; border: 3px solid transparent; border-top-color: #8c8880; border-bottom: 0; }
.caret.dark::before { border-top-color: #000; }
.hot { display: flex; align-items: center; background: #dbe1e8; height: 23px; margin: 0 1px; }

/* workspace */
main { flex: 1; display: flex; min-height: 0; border-top: 1px solid #808080; }
.panel { width: 194px; flex: none; display: flex; flex-direction: column; border-right: 1px solid #fff; border-top: 1px solid #fff; padding: 6px 0 1px 2px; }
.tabs { display: flex; align-items: flex-end; height: 25px; padding-left: 1px; border-top: 1px solid #404040; border-left: 1px solid #404040; }
.tabs button { width: 27px; height: 22px; border: 1px solid; border-color: #fff #808080 transparent #fff; }
.tabs button.active { width: 30px; height: 24px; border-right-color: #404040; }
.tabs svg { width: 17px; height: 17px; }
.pm {
  flex: 1;
  border: 2px solid;
  border-color: #404040 #606060 #606060 #404040;
  border-top: 1px solid #fff;
  box-shadow: 1px 0 #fff;
  margin-right: 1px;
  background: linear-gradient(#5bbaff, #7cc6fa 22%, #b0d8f0 60%, #dde4ea 90%, #e6e6e6);
}
.pm h2 {
  height: 27px;
  display: flex;
  align-items: center;
  gap: 2px;
  padding-left: 2px;
  border-top: 1px solid #404040;
  border-bottom: 1px solid #404040;
  background: #9d9b94;
  color: #fff;
  font: bold 16px/24px "Noto Sans CJK SC", sans-serif;
}
.acts { display: flex; gap: 4px; padding: 5px 0 10px 25px; }
.acts button { width: 31px; height: 32px; border-radius: 50%; background: radial-gradient(#a5d2fb, #88c2f6 70%, #c4e2fb); border: 1px solid #6a9cc8; box-shadow: 1px 1px 1px #3c6890; }
.acts svg { width: 20px; height: 20px; }
.acts .wide { width: 24px; }
.group {
  margin: 0 3px 7px 5px;
  padding: 0 11px 6px 14px;
  border: 2px solid;
  border-color: #f4f3f0 #8c8a84 #8c8a84 #f4f3f0;
  border-radius: 11px;
  background: #d4d0c8;
  font-size: 11px;
}
.group h3 {
  display: flex;
  justify-content: space-between;
  align-items: center;
  height: 19px;
  margin-bottom: 4px;
  border-bottom: 1px dotted #000;
  font: 12px/17px "Liberation Sans", "Noto Sans CJK SC", sans-serif;
}
.tri { border: 5px solid transparent; border-bottom-color: #000; border-top: 0; }
.field, .listbox, .refs, .tbl {
  width: 100%;
  border: 2px solid;
  border-color: #606060 #f4f3f0 #f4f3f0 #606060;
  background: #fff;
}
.field { display: block; height: 20px; padding: 0 2px; font: 11px/16px "Liberation Sans", "Noto Sans CJK SC", sans-serif; border-radius: 0; }
.listbox { display: flex; height: 70px; }
.listbox select { flex: 1; min-width: 0; height: 66px; padding: 0; border: 0; outline: 0; overflow: hidden; background: #fff; font: 11px/13px "Liberation Sans", sans-serif; border-radius: 0; scrollbar-width: none; }
.listbox option { min-height: 13px; height: 13px; padding: 0 2px; color: #000; white-space: nowrap; }
.listbox option:checked { background: #0a246a linear-gradient(#0a246a, #0a246a); color: #fff; }
.sb, .vs, .hs { background: repeating-conic-gradient(#fff 0 25%, #d4d0c8 0 50%) 0 0 / 2px 2px; }
.sb { width: 16px; display: flex; flex-direction: column; }
.sb button { height: 16px; }
.sb .thumb { height: 8px; }
.sb .down { margin-top: auto; }
.up::before { content: ""; border: 4px solid transparent; border-bottom-color: #000; border-top: 0; }
.down:not(.task)::before { content: ""; border: 4px solid transparent; border-top-color: #000; border-bottom: 0; }
.left::before { content: ""; border: 4px solid transparent; border-right-color: #808080; border-left: 0; }
.right::before { content: ""; border: 4px solid transparent; border-left-color: #808080; border-right: 0; }
.tick { display: flex; align-items: center; height: 18px; margin-top: 6px; font-size: 12px; }
.tick input { appearance: none; width: 12px; height: 12px; margin: 0 5px 0 0; background: #fff; border: 1px solid; border-color: #606060 #f4f3f0 #f4f3f0 #606060; box-shadow: inset 1px 1px #404040; }
.tick.out { height: 16px; margin: 0 0 8px -3px; }
.refs { display: flex; align-items: flex-start; height: 63px; padding-top: 1px; }
.cap { height: 16px; margin: 5px 0; font-size: 12px; }
.tbl { height: 78px; background: #808080; }
.tbl.tall { height: 92px; }
table { border-collapse: collapse; table-layout: fixed; width: 131px; font-size: 12px; }
th, td { height: 16px; padding: 0 1px; border: 1px solid #000; border-width: 0 1px 1px 0; background: #fff; line-height: 15px; text-align: left; font-weight: normal; white-space: nowrap; }
th { background: #d4d0c8; text-align: center; }
td + td { text-align: right; font-size: 11px; }
.edit span { background: #0a246a; color: #fff; padding: 0 1px; display: inline-block; }
.off td { color: #808080; }

/* graphics area */
.view {
  flex: 1;
  min-width: 0;
  margin-left: 6px;
  display: grid;
  grid-template-columns: minmax(0, 1fr) 16px;
  grid-template-rows: minmax(0, 1fr) 16px;
  border-left: 2px solid #000;
  border-top: 1px solid #000;
}
.canvas { position: relative; background: linear-gradient(#57b9ff, #6cc2fe 16%, #84c9f9 33%, #a4d4f0 56%, #d0e2ed 85%, #e4e5e7 98%); }
.scene { width: 100%; height: 100%; }
.deg { font: bold italic 15px "Liberation Serif", serif; fill: #10c020; }
.ax { font: bold 10px "Liberation Serif", serif; }
.ax.x { fill: #d02020; }
.ax.y { fill: #187030; }
.ax.z { fill: #1820a0; }
.tree { position: absolute; left: 2px; top: 0; height: 20px; display: flex; align-items: center; }
.tree button { width: 9px; height: 9px; border: 1px solid #5080a8; line-height: 7px; font-size: 9px; }
.tree i { width: 6px; border-top: 1px dotted #456; }
.tree span { margin-left: 2px; }
.tree .n { margin-left: 14px; font: 10px/16px "Liberation Mono", monospace; }
.corner { position: absolute; right: 0; top: 0; width: 102px; height: 102px; }
.viewname { position: absolute; left: 0; bottom: 0; width: 120px; height: 19px; display: flex; align-items: center; border: 1px solid #000; border-left: 0; background: #ececc0; }
.viewname select { appearance: none; flex: 1; height: 17px; padding: 0 0 0 18px; border: 0; border-right: 1px solid #000; border-radius: 0; background: none; color: #000; font: 11px/16px "Liberation Mono", "Noto Sans CJK SC", sans-serif; }
.vs { display: flex; flex-direction: column; }
.vs .split { height: 7px; }
.vs button, .hs button { width: 16px; height: 16px; }
.vs .down { margin-top: auto; }
.vs .up::before { border-bottom-color: #808080; }
.vs .down::before { border-top-color: #808080; }
.hs { display: flex; }
.hs .split { width: 5px; }
.hs .right { margin-left: auto; }
.taskpane { width: 25px; flex: none; display: flex; flex-direction: column; align-items: center; padding-top: 27px; border-left: 1px solid #fff; }
.tp { width: 21px; height: 27px; align-self: flex-start; border: 1px solid #b8c0c8; border-left: 0; border-radius: 0 3px 3px 0; background: #e6e6e6; }
.tp.active { background: #fff; border-right: 2px solid #f09030; }
.tp svg { width: 17px; height: 17px; }
.round { width: 16px; height: 16px; margin: 0 0 2px; border-radius: 50%; background: #f0f6ff; border: 1px solid #9cb8dc; }
.round svg { width: 14px; height: 14px; fill: none; stroke: #102c70; stroke-width: 1.5; }
.rail { flex: 1; width: 5px; margin: 8px 0 4px; border: solid #909090; border-width: 0 1px; background: #e8e6e0; }
.rail + .round { margin-bottom: 76px; }

/* status and taskbar */
.status { display: flex; align-items: center; height: 22px; padding: 0 47px 0 1px; border-bottom: 1px solid #fff; }
.cells { margin-left: auto; display: flex; gap: 2px; }
.cells i { width: 6px; height: 17px; border: 1px solid; border-color: #808080 #fff #fff #808080; }
.cells b { width: 92px; height: 17px; border: 1px solid; border-color: #808080 #fff #fff #808080; font-weight: normal; line-height: 15px; }
.status em { width: 14px; margin-left: 12px; border-top: 2px solid #58b0c8; background: #ffffd0; color: #087018; text-align: center; font: bold 12px/12px "Liberation Sans", sans-serif; }
.taskbar { position: relative; display: flex; align-items: center; height: 28px; padding: 0 2px 2px; }
.start, .task { height: 22px; border: 1px solid; border-color: #fff #404040 #404040 #fff; box-shadow: inset -1px -1px #808080; }
.start { width: 47px; white-space: nowrap; }
.bar { width: 3px; height: 19px; margin: 0 5px 0 7px; border: 1px solid; border-color: #fff #808080 #808080 #fff; }
.quick { display: flex; }
.quick button { width: 23px; height: 22px; }
.quick svg, .tray button svg { width: 17px; height: 17px; }
.more { width: 20px; text-align: center; font-size: 15px; line-height: 8px; height: 16px; }
.more + .bar { margin: 0 4px 0 2px; }
.task { width: 160px; justify-content: flex-start; gap: 2px; padding-left: 4px; margin-right: 3px; white-space: nowrap; }
.task.down { border-color: #404040 #fff #fff #404040; box-shadow: inset 1px 1px #808080; background: repeating-conic-gradient(#fff 0 25%, #d4d0c8 0 50%) 0 0 / 2px 2px; }
.task span { font: 10px/16px "Liberation Mono", monospace; }
.tray { margin-left: auto; display: flex; align-items: center; }
.tray button { width: 24px; }
.line { width: 2px; height: 24px; border-left: 1px solid #808080; border-right: 1px solid #fff; }
.opts { width: 20px; height: 20px; display: flex; flex-direction: column; align-items: center; gap: 4px; }
.opts svg { width: 10px; height: 10px; }
.clock { width: 79px; height: 23px; display: flex; align-items: center; gap: 3px; padding-left: 4px; border: 1px solid; border-color: #808080 #fff #fff #808080; }
.clock span { font-size: 15px; line-height: 12px; }
.clock time { margin-left: 5px; font: 10px/16px "Liberation Mono", monospace; }
.mark { position: absolute; left: 8px; bottom: 5px; display: flex; flex-direction: column; gap: 2px; color: #fff; opacity: .8; pointer-events: none; }
.mark strong { font: bold 30px/28px "Noto Sans CJK SC", sans-serif; opacity: .6; }
.mark span { font: bold 17px/18px "Liberation Sans", sans-serif; }
```
